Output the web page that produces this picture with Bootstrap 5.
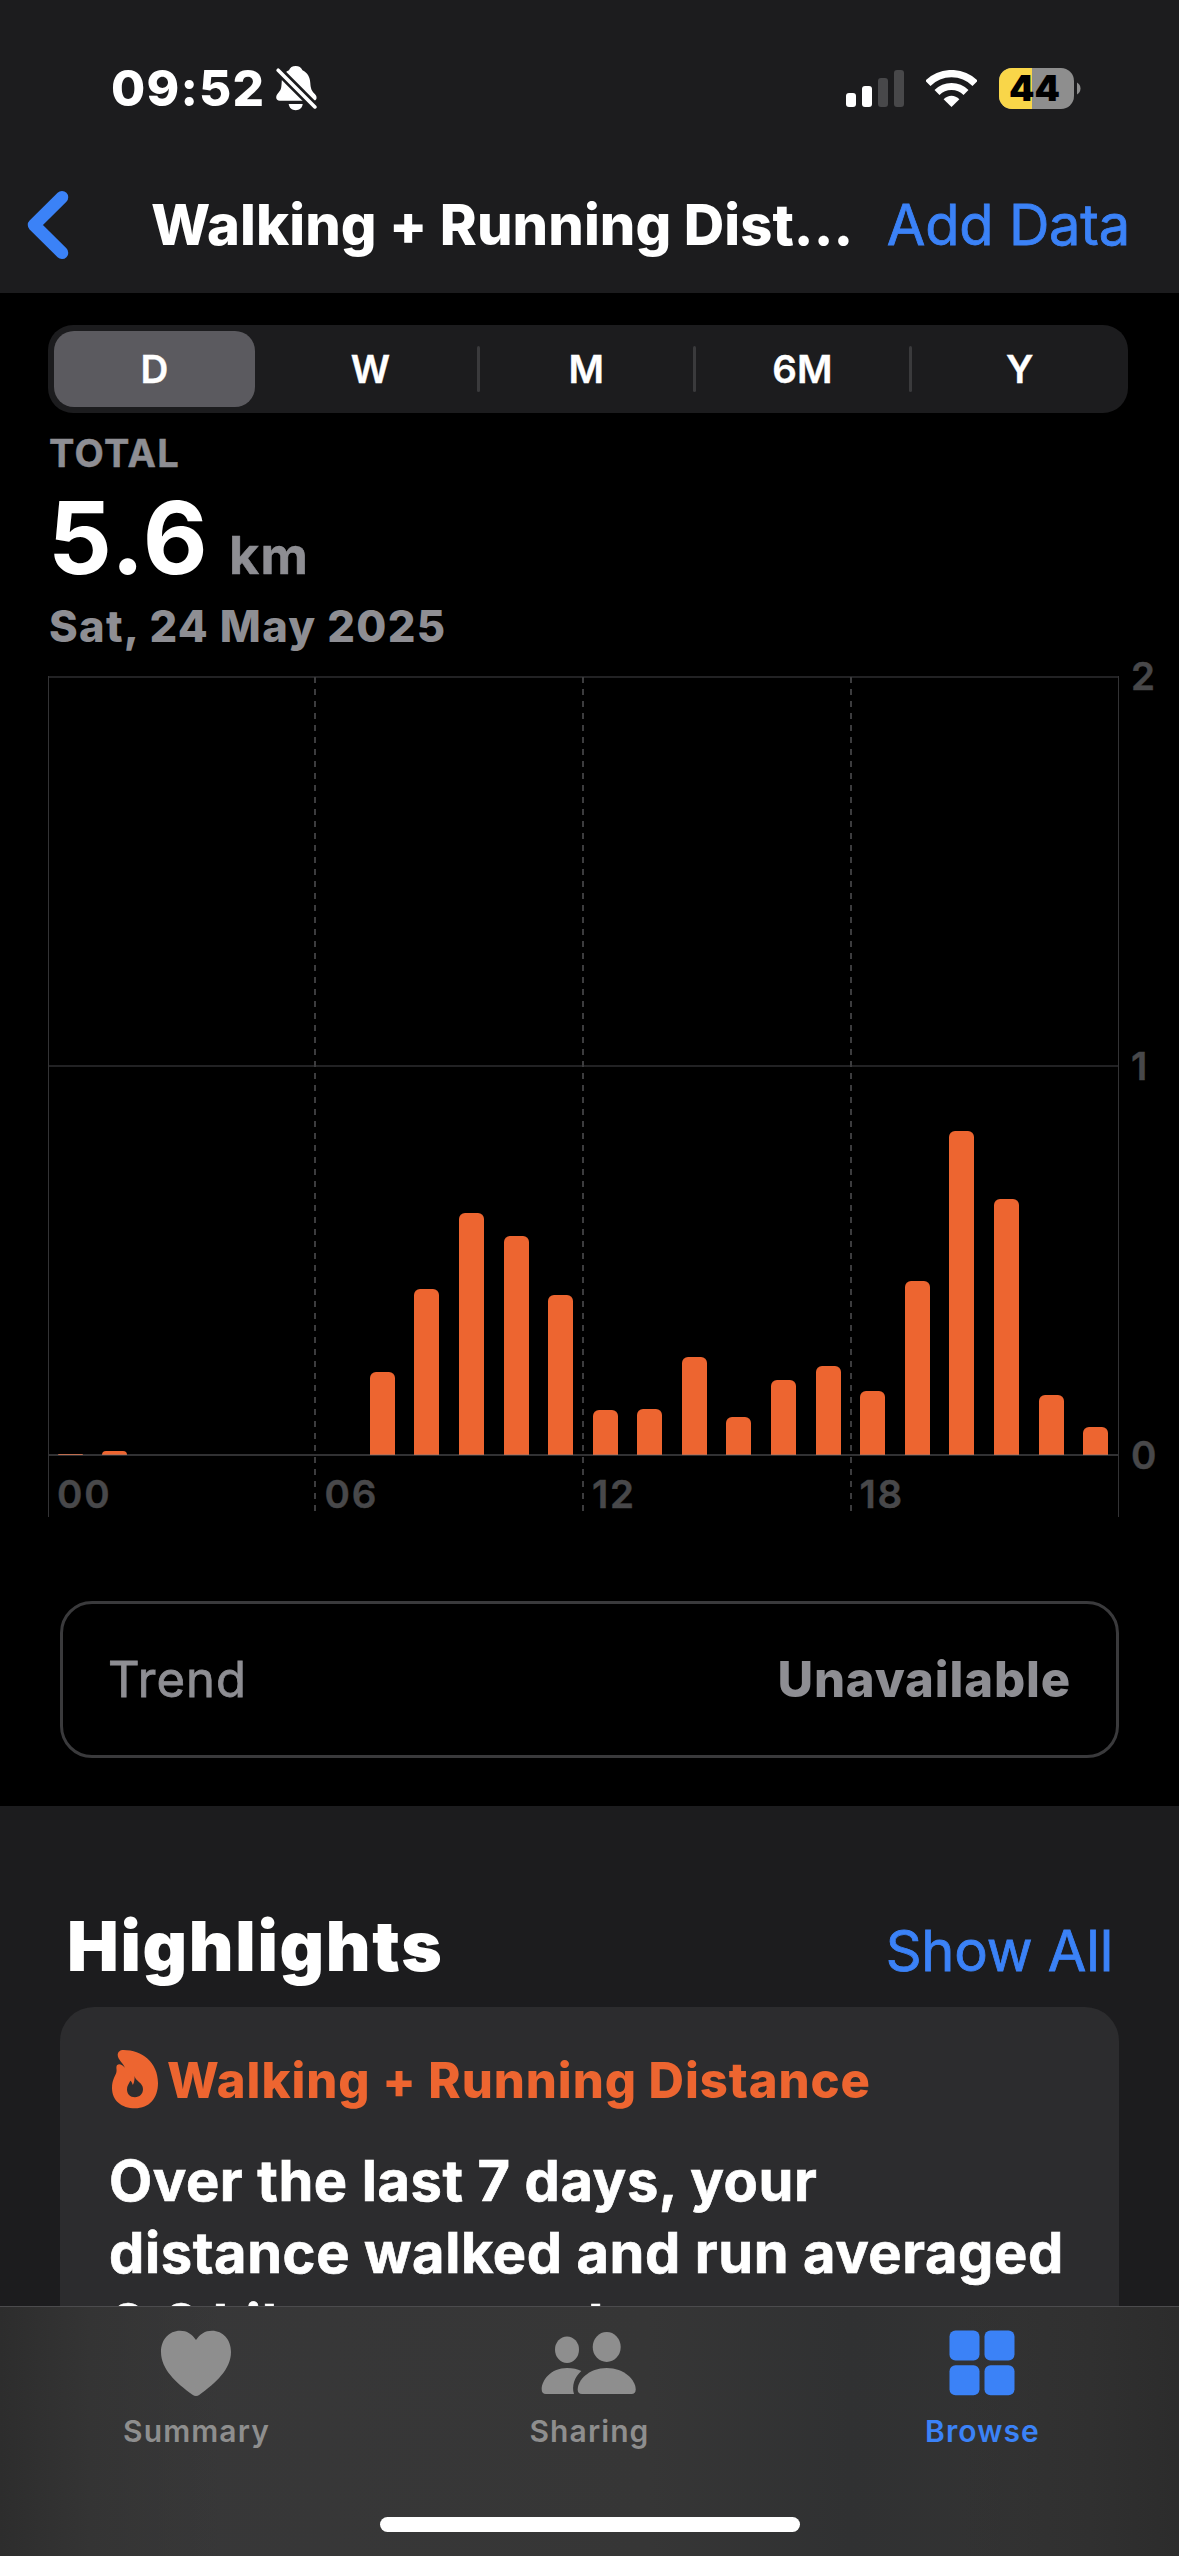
<!DOCTYPE html>
<html lang="en" data-bs-theme="dark">
<head>
<meta charset="utf-8">
<title>Walking + Running Distance</title>
<link href="https://cdn.jsdelivr.net/npm/bootstrap@5.3.0/dist/css/bootstrap.min.css" rel="stylesheet">
<style>
  html, body { height: 2556px; overflow: hidden; }
  body { width: 1179px; background: #1c1c1e; color: #fff; font-family: Inter, "Liberation Sans", sans-serif; font-feature-settings: "calt" 0; }
  svg { display: block; flex: none; }
  main { height: 2263px; overflow: hidden; }
  .top-panel { background: #1c1c1e; height: 293px; }
  .status-row { height: 176px; padding: 0 98px 0 111px; }
  .clock { font-size: 49.5px; font-weight: 800; letter-spacing: 1.2px; line-height: 60px; width: 165px; }
  .status-gap { margin-left: 22px; }
  .title-row { height: 97px; padding: 0 49px 0 26px; }
  .page-title { font-size: 56px; font-weight: 800; letter-spacing: .08px; line-height: 70px; margin-left: 77px; }
  .link-blue { color: #3b82f7; font-size: 56px; font-weight: 400; line-height: 70px; letter-spacing: -.2px; text-decoration: none; -webkit-text-stroke: .8px #3b82f7; }
  .summary-panel { background: #000; height: 1513px; padding-top: 32px; }
  .period { margin: 0 51px 0 48px; height: 88px; border-radius: 25px; background: #1c1c1e; }
  .period-item { flex: 0 0 20%; font-size: 38.5px; font-weight: 600; letter-spacing: .3px; padding: 0 6px; }
  .period-label { height: 76px; line-height: 76px; border-radius: 20px; text-align: center; flex: 1 1 auto; margin-right: 3px; -webkit-text-stroke: .4px #fff; }
  .period-label.chosen { background: #5b5a5f; }
  .period-item:last-child .period-label { margin-right: 0; }
  .period-item.split { padding-right: 0; }
  .period-item.split .period-label { margin-right: 6px; }
  .period-item.split::after { content: ""; width: 3px; height: 46px; border-radius: 2px; background: #3a3a3c; }
  .reading { padding-left: 48px; color: #8e8e93; font-weight: 800; }
  .reading-kind { font-size: 38px; line-height: 50px; font-weight: 700; letter-spacing: 1.4px; margin-top: 15px; margin-left: 1px; -webkit-text-stroke: .5px #8e8e93; }
  .reading-value { margin-top: 10px; height: 100px; }
  .reading-number { color: #fff; font-size: 100px; font-weight: 650; line-height: 100px; letter-spacing: 1.3px; }
  .reading-unit { font-size: 52px; line-height: 60px; letter-spacing: 1.5px; margin-left: 20px; font-weight: 700; -webkit-text-stroke: .5px #8e8e93; }
  .reading-date { font-size: 43.5px; line-height: 60px; letter-spacing: 1.3px; margin-top: 8px; margin-left: 1px; }
  .chart { margin: 20px 0 0 48px; height: 841px; color: #48484a; font-size: 38.5px; font-weight: 600; -webkit-text-stroke: .5px #48484a; }
  .plot { width: 1070px; position: relative; }
  .bars { height: 779px; }
  .bar-slot { flex: 1 1 0; }
  .hour-bar { width: 25px; border-radius: 6px 6px 0 0; background: #ed6530; }
  .grid-lines { position: absolute; left: 0; top: 0; }
  .hours { height: 62px; }
  .hours span { flex: 1 1 0; padding-left: 9px; line-height: 40px; margin-top: 19px; letter-spacing: 1.8px; }
  .scale-labels { height: 819px; margin: -20px 0 0 13px; line-height: 40px; }
  .trend { margin: 84px 60px 0 60px; height: 157px; border: 3px solid #3a3a3c; border-radius: 32px; color: #8e8e93; font-size: 49px; padding: 0 45px 0 45px; }
  .trend-name { letter-spacing: 1px; -webkit-text-stroke: .8px #8e8e93; }
  .trend-state { font-weight: 800; letter-spacing: .85px; }
  .highlights-head { padding: 95px 66px 0 67px; }
  .highlights-title { font-size: 69px; font-weight: 900; line-height: 90px; letter-spacing: 1.67px; }
  .highlight { margin: 16px 60px 0 60px; height: 700px; border-radius: 34px; background: #2c2c2e; padding: 44px 0 0 48px; }
  .flame { margin: -4px 0 0 3px; }
  .highlight-name { color: #ed6530; font-size: 49px; font-weight: 800; line-height: 60px; letter-spacing: .93px; margin-left: 6px; }
  .highlight-text { font-size: 56px; font-weight: 700; line-height: 72.2px; letter-spacing: .6px; margin: 34px 0 0 1px; -webkit-text-stroke: .7px #fff; }
  .tabs { height: 250px; border-top: 1px solid #4b4b4d; color: #8e8e8e;
    background: linear-gradient(90deg, #2d2d2d 0, #343434 90px, rgba(52,52,52,0) 220px, rgba(50,50,50,0) 960px, #303030 1090px, #2c2c2c 100%), linear-gradient(90deg, #383839, #363636 55%, #303132 72%, #333 88%); }
  .tab-item { flex: 1 1 0; padding-top: 19px; }
  .tab-item svg { margin-right: 2px; }
  .tab-item span { font-size: 30px; font-weight: 600; line-height: 40px; letter-spacing: 1.1px; margin-top: 13px; }
  .tab-item.current { color: #3b82f7; }
  .home-bar { width: 420px; height: 15px; border-radius: 8px; background: #fff; margin: 66px auto 0; }
</style>
<script src="https://cdn.jsdelivr.net/npm/bootstrap@5.3.0/dist/js/bootstrap.bundle.min.js"></script>
</head>
<body>
<header class="top-panel">
  <div class="status-row d-flex align-items-center">
    <div class="clock">09:52</div>
    <svg width="42" height="45" viewBox="0 0 42 45">
      <path fill="#fff" d="M19.7 0C23 0 25.300 1.500 26.500 4.200C31.500 6.500 34 11 34.300 17C34.600 23 35.800 25 39 28.200C40.300 29.500 40.800 31 40.500 32.400C40.100 34 39 34.700 37 34.700H4C1.500 34.700 .2 33.500 .2 31.500C.2 29.500 1.200 28 3 26C5.200 23.500 5.400 21.500 5.700 16C6 10 8.500 6 13 4.200C14 1.500 16.400 0 19.700 0Z"/>
      <path fill="#fff" d="M12.700 38H26.700C26.300 41.800 23.500 44.200 19.700 44.200S13.100 41.800 12.700 38Z"/>
      <path d="M1 3L40 42" stroke="#1c1c1e" stroke-width="9"/>
      <path d="M2.200 4.200L38.900 40.900" stroke="#fff" stroke-width="3.600" stroke-linecap="round"/>
    </svg>
    <div class="d-flex align-items-center ms-auto">
      <svg width="58" height="37" viewBox="0 0 58 37">
        <rect y="23" width="10" height="14" rx="3" fill="#fff"/><rect x="16" y="16" width="10" height="21" rx="3" fill="#fff"/>
        <rect x="32" y="8" width="10" height="29" rx="3" fill="#48484a"/><rect x="48" width="10" height="37" rx="3" fill="#48484a"/>
      </svg>
      <svg class="status-gap" width="51" height="37" viewBox="0 0 51 37" fill="none" stroke="#fff">
        <path stroke-width="7.400" d="M1.900 13.400A33.400 33.400 0 0 1 49.100 13.400"/><path stroke-width="7" d="M11 22.500A20.500 20.500 0 0 1 40 22.500"/>
        <path stroke="none" fill="#fff" d="M25.500 37L17.600 29.300C22 24.600 29 24.600 33.400 29.300Z"/>
      </svg>
      <svg class="status-gap" width="82" height="41" viewBox="0 0 82 41">
        <rect width="75" height="41" rx="13" fill="#8e8e8e"/><path d="M13 0H33V41H13A13 13 0 0 1 0 28V13A13 13 0 0 1 13 0Z" fill="#f9d649"/>
        <path d="M78 14.500C82.700 17 82.700 24 78 26.500Z" fill="#8e8e8e"/>
        <text x="35.500" y="33" text-anchor="middle" font-family="Inter" font-size="35" font-weight="900" textLength="51" lengthAdjust="spacingAndGlyphs">44</text>
      </svg>
    </div>
  </div>
  <div class="title-row d-flex align-items-center">
    <svg width="48" height="72" viewBox="0 0 48 72"><path d="M36 8.200L8 36L36 63.800" fill="none" stroke="#3b82f7" stroke-width="12.500" stroke-linecap="round" stroke-linejoin="round"/></svg>
    <div class="page-title text-nowrap">Walking + Running Dist...</div>
    <a class="link-blue ms-auto text-nowrap">Add Data</a>
  </div>
</header>

<main>
  <section class="summary-panel">
    <div class="period d-flex">
      <div class="period-item d-flex align-items-center"><div class="period-label chosen">D</div></div>
      <div class="period-item split d-flex align-items-center"><div class="period-label">W</div></div>
      <div class="period-item split d-flex align-items-center"><div class="period-label">M</div></div>
      <div class="period-item split d-flex align-items-center"><div class="period-label">6M</div></div>
      <div class="period-item d-flex align-items-center"><div class="period-label">Y</div></div>
    </div>
    <div class="reading">
      <div class="reading-kind">TOTAL</div>
      <div class="reading-value d-flex align-items-baseline"><span class="reading-number">5.6</span><span class="reading-unit">km</span></div>
      <div class="reading-date">Sat, 24 May 2025</div>
    </div>
    <div class="chart d-flex">
      <div class="plot">
        <div class="bars d-flex align-items-end" id="bars"></div>
        <div class="hours d-flex"><span>00</span><span>06</span><span>12</span><span>18</span></div>
        <svg class="grid-lines" width="1071" height="841" viewBox="0 0 1071 841" fill="none">
          <path d="M0 1H1070M0 390H1070" stroke="#222224" stroke-width="2"/>
          <path d="M0 779H1070" stroke="#7a7a80" stroke-opacity=".4" stroke-width="2"/>
          <path d="M.5 0V841M1070.500 0V841" stroke="#333335"/>
          <path d="M267 1V841M535 1V841M803 1V841" stroke="#3c3c3e" stroke-width="2" stroke-dasharray="6 6"/>
        </svg>
      </div>
      <div class="scale-labels d-flex flex-column justify-content-between"><span>2</span><span>1</span><span>0</span></div>
    </div>
    <div class="trend d-flex align-items-center justify-content-between"><span class="trend-name">Trend</span><span class="trend-state">Unavailable</span></div>
  </section>

  <section>
    <div class="highlights-head d-flex align-items-baseline justify-content-between">
      <h2 class="highlights-title m-0">Highlights</h2><a class="link-blue">Show All</a>
    </div>
    <div class="highlight">
      <div class="d-flex align-items-center">
        <svg class="flame" width="50" height="60" viewBox="0 0 50 60">
          <path fill="#ed6530" fill-rule="evenodd" d="M6.700 6C6.700 3 8.800 1 12.500 1C31 1 47 13.500 47 34C47 49.500 38 59.300 24 59.300C10.500 59.300 1 51.500 1 39C1 31.500 3.600 28 5.200 24C6.300 20.800 4.600 18.500 6 16.300C7.800 14 11.500 15.600 13.700 18.800C13 14.500 6.700 11 6.700 6ZM23.700 27C24 32 32 33.500 32 40C32 45 28.500 48.200 24 48.200C19 48.200 16 45 16 40.500C16 36.500 17.800 35 19.300 31.700C20.700 32.800 21.200 34 21.800 36C23.700 33 23.400 30 23.700 27Z"/>
        </svg>
        <div class="highlight-name text-nowrap">Walking + Running Distance</div>
      </div>
      <p class="highlight-text text-nowrap">Over the last 7 days, your<br>distance walked and run averaged<br>6.6 kilometres a day.</p>
    </div>
  </section>
</main>

<nav class="tabs fixed-bottom">
  <div class="d-flex">
    <div class="tab-item d-flex flex-column align-items-center">
      <svg width="80" height="72" viewBox="0 0 80 72"><path fill="currentColor" d="M40 14C44 8 49 4.700 56 4.700C67 4.700 75 13.500 75 26C75 43 60 57 43.500 68.700Q40 71.300 36.500 68.700C20 57 5 43 5 26C5 13.500 13 4.700 24 4.700C31 4.700 36 8 40 14Z"/></svg>
      <span>Summary</span>
    </div>
    <div class="tab-item d-flex flex-column align-items-center">
      <svg width="100" height="72" viewBox="0 0 100 72" fill="currentColor">
        <ellipse cx="28" cy="23.700" rx="12" ry="13.200"/><ellipse cx="67.700" cy="21" rx="14" ry="15"/>
        <path d="M43 68C40 68 38.700 66.300 38.700 63.500C38.700 54 50 42 67.700 42S96.700 54 96.700 63.500C96.700 66.300 95.400 68 92.400 68Z"/>
        <path d="M7 68C4 68 2.700 66.300 2.700 63.500C2.700 54 12 42 28 42C34 42 38.500 43 42.300 45C35.500 51 32.500 60 35 68Z"/>
      </svg>
      <span>Sharing</span>
    </div>
    <div class="tab-item current d-flex flex-column align-items-center">
      <svg width="80" height="72" viewBox="0 0 80 72" fill="currentColor"><rect x="7.500" y="4.500" width="30" height="30" rx="6"/><rect x="42.500" y="4.500" width="30" height="30" rx="6"/><rect x="7.500" y="39.300" width="30" height="30" rx="6"/><rect x="42.500" y="39.300" width="30" height="30" rx="6"/></svg>
      <span>Browse</span>
    </div>
  </div>
  <div class="home-bar"></div>
</nav>
<script>
  // Kilometres per hour of the day; the plot spans 0 to 2 km.
  const km = [.003,.01,0,0,0,0,0,.214,.427,.622,.563,.411,.116,.119,.252,.098,.193,.229,.165,.447,.832,.658,.155,.073];
  document.getElementById('bars').innerHTML = km.map(v =>
    `<div class="bar-slot d-flex justify-content-center"><div class="hour-bar" style="height:${Math.round(v / 2 * 779)}px"></div></div>`).join('');
</script>
</body>
</html>
